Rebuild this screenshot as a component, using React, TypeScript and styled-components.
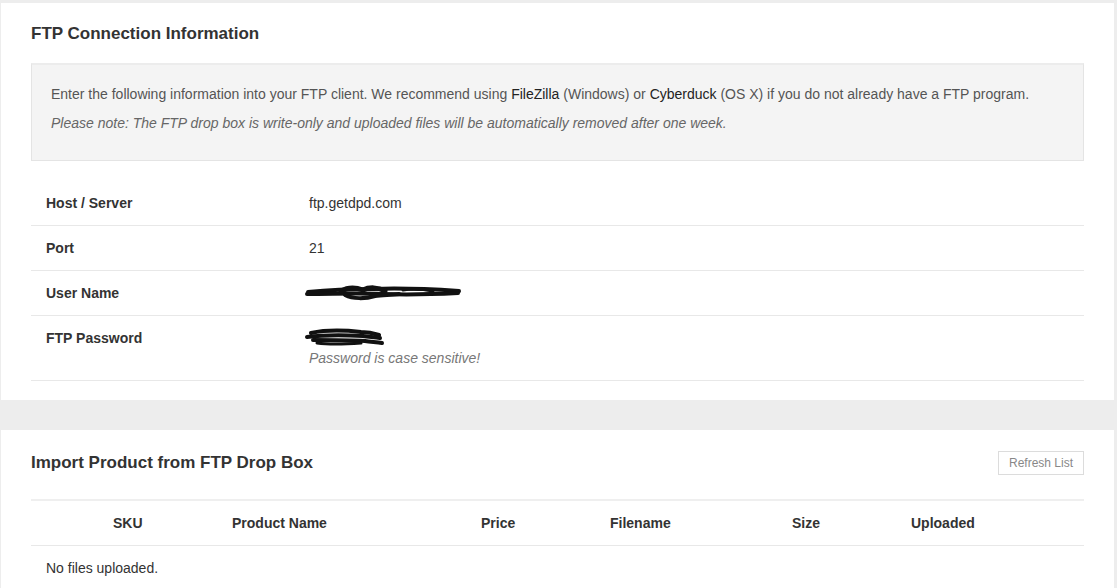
import styled, { createGlobalStyle } from 'styled-components';

const GlobalStyle = createGlobalStyle`
  body {
    margin: 0;
    background: #ededed;
    font-family: "Liberation Sans", Arial, sans-serif;
    color: #333;
  }
`;

const Page = styled.div`
  padding: 3px 3px 0 1px;
  display: flex;
  flex-direction: column;
  gap: 30px;
`;

const Card = styled.section`
  background: #fff;
  padding: 21px 30px 19px;
`;

const CardHeader = styled.div<{ $h: number; $gap: number }>`
  display: flex;
  align-items: center;
  justify-content: space-between;
  height: ${(p) => p.$h}px;
  margin-bottom: ${(p) => p.$gap}px;
`;

const Title = styled.h2`
  margin: 0;
  font-size: 17px;
  line-height: 20px;
  font-weight: bold;
  color: #333;
`;

const Notice = styled.div`
  background: #f4f4f4;
  border: 1px solid #e4e4e4;
  border-top-width: 2px;
  border-top-color: #ececec;
  padding: 19px 19px 17px;
  font-size: 14px;
  line-height: 20px;
  color: #555;
  margin-bottom: 20px;

  p {
    margin: 0 0 9px;
  }
  p:last-child {
    margin-bottom: 10px;
  }
  em {
    color: #666;
  }
  b {
    font-weight: normal;
    color: #222;
  }
`;

const InfoRow = styled.div`
  display: grid;
  grid-template-columns: 263px 1fr;
  border-bottom: 1px solid #e8e8e8;
  font-size: 14px;
  line-height: 20px;
`;

const Label = styled.div`
  padding: 12px 15px;
  font-weight: bold;
  color: #333;
`;

const Value = styled.div`
  padding: 12px 15px;
  color: #333;
  display: flex;
  flex-direction: column;
`;

const Hint = styled.em`
  color: #777;
`;

const Scribble = styled.svg`
  display: block;
  height: 20px;
  margin-left: -6px;
`;

const RefreshButton = styled.button`
  height: 24px;
  padding: 0 10px;
  background: #fff;
  border: 1px solid #dcdcdc;
  color: #888;
  font-family: "Liberation Sans", Arial, sans-serif;
  font-size: 12px;
`;

const FileRow = styled.div`
  display: grid;
  grid-template-columns: 119px 249px 129px 182px 119px 1fr;
  padding: 12px 0 12px 82px;
  font-size: 14px;
  line-height: 20px;
  font-weight: bold;
  color: #333;
  border-top: 2px solid #efefef;
  border-bottom: 1px solid #e8e8e8;
`;

const Empty = styled.div`
  padding: 12px 15px;
  font-size: 14px;
  line-height: 20px;
  color: #333;
`;

// hand-drawn marker scribbles covering the credentials
const UserScribble = () => (
  <Scribble width="162" viewBox="0 0 162 20">
    <g stroke="#111" fill="none" strokeLinecap="round" strokeLinejoin="round">
      <path d="M5 9 C25 7 45 6 70 6 C95 5 125 6 156 8" strokeWidth="4" />
      <path d="M4 11 C30 11 55 10 80 11 C105 12 135 11 155 10" strokeWidth="4" />
      <path d="M38 8 C45 4 52 4 60 7 C66 4 75 4 82 8" strokeWidth="5" />
      <path d="M42 12 C50 16 62 16 72 13 C80 12 88 12 96 11" strokeWidth="4" />
      <path d="M100 7 C110 5 120 6 130 8" strokeWidth="3" />
    </g>
  </Scribble>
);

const PassScribble = () => (
  <Scribble width="84" viewBox="0 0 84 20">
    <g stroke="#111" fill="none" strokeLinecap="round" strokeLinejoin="round">
      <path d="M8 5 C22 2 40 2 58 4 C64 4 70 5 76 7" strokeWidth="4" />
      <path d="M4 9 C20 7 40 7 60 8 C66 9 72 9 77 10" strokeWidth="4" />
      <path d="M10 12 C25 12 45 12 62 13 C68 14 74 14 79 15" strokeWidth="4" />
      <path d="M14 15 C28 17 45 16 58 15" strokeWidth="3" />
    </g>
  </Scribble>
);

const App = () => {
  return (
    <>
      <GlobalStyle />
      <Page>
        <Card>
          <CardHeader $h={20} $gap={19}>
            <Title>FTP Connection Information</Title>
          </CardHeader>
          <Notice>
            <p>
              Enter the following information into your FTP client. We recommend using <b>FileZilla</b> (Windows) or{' '}
              <b>Cyberduck</b> (OS X) if you do not already have a FTP program.
            </p>
            <p>
              <em>Please note: The FTP drop box is write-only and uploaded files will be automatically removed after one week.</em>
            </p>
          </Notice>
          <InfoRow>
            <Label>Host / Server</Label>
            <Value>ftp.getdpd.com</Value>
          </InfoRow>
          <InfoRow>
            <Label>Port</Label>
            <Value>21</Value>
          </InfoRow>
          <InfoRow>
            <Label>User Name</Label>
            <Value>
              <UserScribble />
            </Value>
          </InfoRow>
          <InfoRow>
            <Label>FTP Password</Label>
            <Value>
              <PassScribble />
              <Hint>Password is case sensitive!</Hint>
            </Value>
          </InfoRow>
        </Card>
        <Card>
          <CardHeader $h={24} $gap={24}>
            <Title>Import Product from FTP Drop Box</Title>
            <RefreshButton>Refresh List</RefreshButton>
          </CardHeader>
          <FileRow>
            <span>SKU</span>
            <span>Product Name</span>
            <span>Price</span>
            <span>Filename</span>
            <span>Size</span>
            <span>Uploaded</span>
          </FileRow>
          <Empty>No files uploaded.</Empty>
        </Card>
      </Page>
    </>
  );
};

export default App;
